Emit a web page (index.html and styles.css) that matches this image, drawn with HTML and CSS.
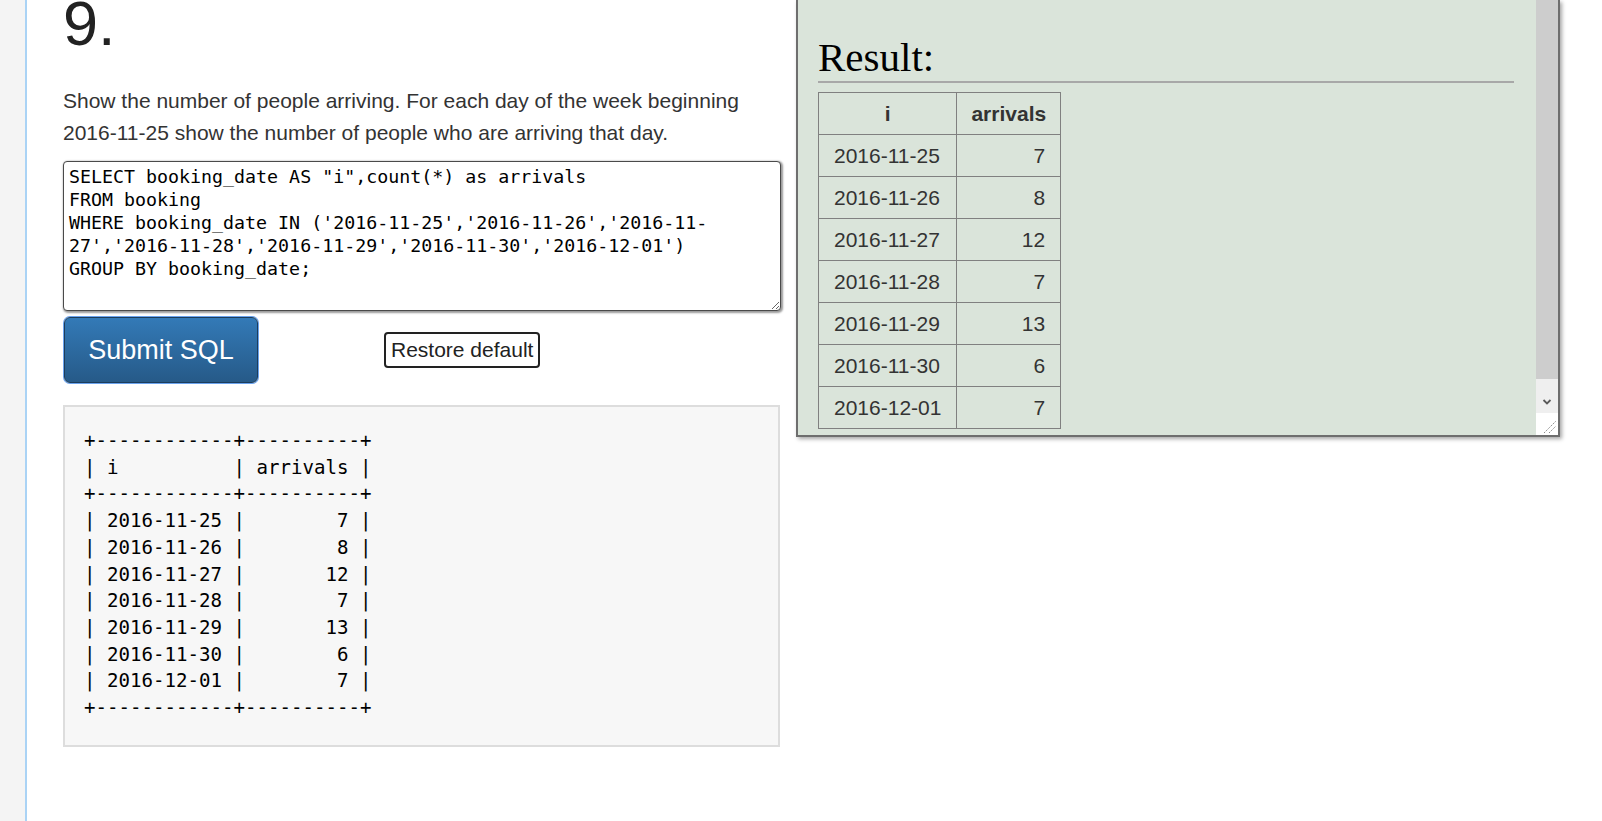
FILE: index.html
```html
<!DOCTYPE html>
<html lang="en">
<head>
<meta charset="utf-8">
<title>SQL Question 9</title>
<link rel="stylesheet" href="styles.css">
</head>
<body>
<div class="page">
  <div class="gutter"></div>
  <main class="main">
    <section class="question">
      <h1 class="qnum">9.</h1>
      <p class="prompt">Show the number of people arriving. For each day of the week beginning 2016-11-25 show the number of people who are arriving that day.</p>
      <textarea class="sql" spellcheck="false">SELECT booking_date AS "i",count(*) as arrivals
FROM booking
WHERE booking_date IN ('2016-11-25','2016-11-26','2016-11-27','2016-11-28','2016-11-29','2016-11-30','2016-12-01')
GROUP BY booking_date;</textarea>
      <div class="actions">
        <button class="submit" type="button">Submit SQL</button>
        <button class="restore" type="button">Restore default</button>
      </div>
<pre class="output">+------------+----------+
| i          | arrivals |
+------------+----------+
| 2016-11-25 |        7 |
| 2016-11-26 |        8 |
| 2016-11-27 |       12 |
| 2016-11-28 |        7 |
| 2016-11-29 |       13 |
| 2016-11-30 |        6 |
| 2016-12-01 |        7 |
+------------+----------+</pre>
    </section>
    <aside class="result-panel">
      <div class="result-body">
        <h2 class="result-title">Result:</h2>
        <hr class="result-rule">
        <table class="result-table">
          <thead>
            <tr><th>i</th><th>arrivals</th></tr>
          </thead>
          <tbody>
            <tr><td>2016-11-25</td><td class="num">7</td></tr>
            <tr><td>2016-11-26</td><td class="num">8</td></tr>
            <tr><td>2016-11-27</td><td class="num">12</td></tr>
            <tr><td>2016-11-28</td><td class="num">7</td></tr>
            <tr><td>2016-11-29</td><td class="num">13</td></tr>
            <tr><td>2016-11-30</td><td class="num">6</td></tr>
            <tr><td>2016-12-01</td><td class="num">7</td></tr>
          </tbody>
        </table>
      </div>
      <div class="scrollbar">
        <div class="scroll-thumb"></div>
        <div class="scroll-track"></div>
        <div class="scroll-arrow">
          <svg width="10" height="8" viewBox="0 0 10 8"><polyline points="1.5,2 5,5.5 8.5,2" fill="none" stroke="#5a5a5a" stroke-width="1.8"/></svg>
        </div>
        <div class="scroll-corner">
          <svg width="22" height="22" viewBox="0 0 22 22"><line x1="8" y1="20" x2="20" y2="8" stroke="#8a8a8a" stroke-width="1" stroke-dasharray="1.5 1"/><line x1="13" y1="20" x2="20" y2="13" stroke="#8a8a8a" stroke-width="1" stroke-dasharray="1.5 1"/></svg>
        </div>
      </div>
    </aside>
  </main>
</div>
</body>
</html>
```

FILE: styles.css
```css
html, body {
  margin: 0;
  padding: 0;
}

body {
  font-family: "Liberation Sans", Arial, sans-serif;
  color: #333;
  background: #fff;
  overflow: hidden;
}

.page {
  display: flex;
  height: 821px;
}

.gutter {
  flex: none;
  width: 25px;
  background: #f4f4f4;
  border-right: 2px solid #aad3f5;
}

.main {
  display: flex;
  align-items: flex-start;
  gap: 15px;
  padding-left: 36px;
}

.question {
  flex: none;
  width: 718px;
}

.qnum {
  font-size: 63px;
  font-weight: normal;
  line-height: 63px;
  margin: -8px 0 30px;
  color: #222;
}

.prompt {
  font-size: 21px;
  line-height: 32px;
  margin: 0 0 12px;
  color: #333;
}

.sql {
  display: block;
  box-sizing: border-box;
  width: 718px;
  height: 150px;
  margin: 0;
  padding: 3px 5px;
  border: 1px solid #4a4a4a;
  border-radius: 4px;
  box-shadow: 1px 1px 2px 1px rgba(0, 0, 0, 0.4);
  font-family: "DejaVu Sans Mono", "Liberation Mono", monospace;
  font-size: 18.3px;
  line-height: 23px;
  color: #000;
  background: #fff;
  resize: both;
}

.actions {
  display: flex;
  align-items: center;
  margin-top: 6px;
}

.submit {
  box-sizing: border-box;
  width: 194px;
  height: 66px;
  margin-left: 1px;
  font-family: "Liberation Sans", Arial, sans-serif;
  font-size: 27px;
  color: #fff;
  background: linear-gradient(#337ab7, #265a88);
  border: 1px solid #1c3d5c;
  border-radius: 6px;
  box-shadow: 0 0 0 1px #6aa3ee;
  padding: 0;
}

.restore {
  margin-left: 126px;
  font-family: "Liberation Sans", Arial, sans-serif;
  font-size: 21px;
  line-height: 24px;
  color: #222;
  background: #fff;
  border: 2px solid #222;
  border-radius: 4px;
  padding: 4px 5px;
}

.output {
  box-sizing: border-box;
  width: 717px;
  margin: 22px 0 0;
  padding: 21px 19px 23px;
  background: #f7f7f7;
  border: 2px solid #ddd;
  font-family: "DejaVu Sans Mono", "Liberation Mono", monospace;
  font-size: 19.1px;
  line-height: 26.7px;
  color: #000;
}

.result-panel {
  flex: none;
  display: flex;
  width: 764px;
  box-sizing: border-box;
  background: #dae4da;
  border: 2px solid #6e6e6e;
  border-top: 0;
  box-shadow: 2px 2px 4px rgba(0, 0, 0, 0.35);
}

.result-body {
  flex: 1;
  padding: 34px 22px 6px 20px;
}

.result-title {
  font-family: "Liberation Serif", "Times New Roman", serif;
  font-size: 41px;
  font-weight: normal;
  line-height: 47px;
  margin: 0;
  color: #000;
}

.result-rule {
  margin: 0;
  height: 0;
  border: 0;
  border-top: 2px solid #a8a8a8;
}

.result-table {
  border-collapse: collapse;
  margin-top: 9px;
  font-size: 21px;
  color: #333;
}

.result-table th,
.result-table td {
  border: 1px solid #808080;
  padding: 9px 15px;
  line-height: 23px;
}

.result-table th {
  font-weight: bold;
  text-align: center;
  padding-left: 14px;
  padding-right: 14px;
}

.result-table td {
  text-align: left;
}

.result-table td.num {
  text-align: right;
}

.scrollbar {
  flex: none;
  width: 22px;
  display: flex;
  flex-direction: column;
}

.scroll-thumb {
  height: 379px;
  background: #cdcdcd;
}

.scroll-track {
  flex: 1;
  background: #efefef;
}

.scroll-arrow {
  height: 23px;
  background: #efefef;
  display: flex;
  align-items: center;
  justify-content: center;
}

.scroll-corner {
  height: 22px;
  background: #fff;
}

.scroll-corner svg {
  display: block;
}
```
